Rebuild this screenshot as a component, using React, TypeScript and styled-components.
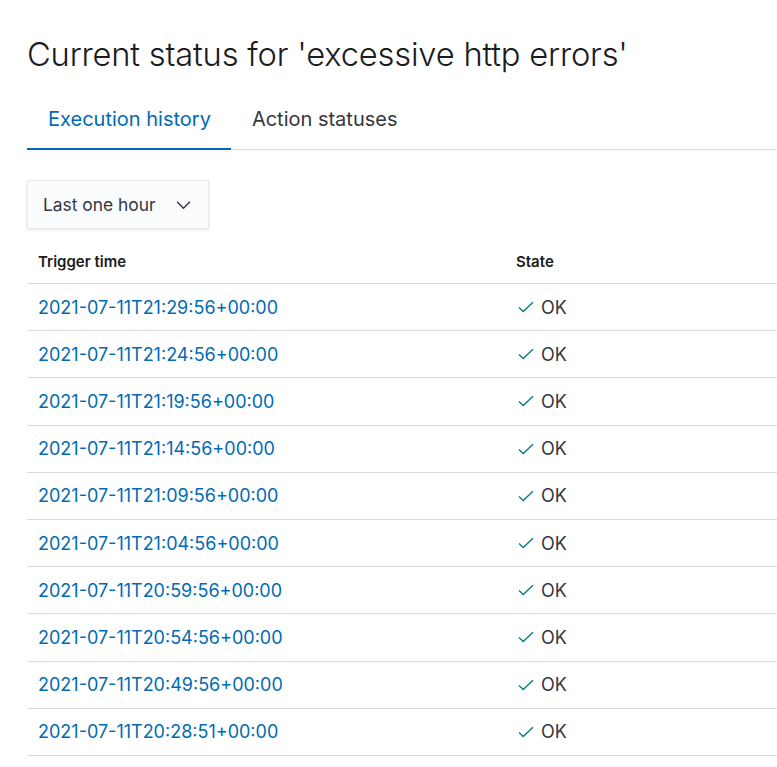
import React from "react";
import styled, { createGlobalStyle } from "styled-components";

const GlobalStyle = createGlobalStyle`
  html, body { margin: 0; padding: 0; background: #fff; overflow: hidden; }
  body { font-family: Inter, "Noto Sans", sans-serif; color: #343741; }
`;

const Page = styled.div`
  padding: 27px 0 0 27px;
  width: 750px;
`;

const Title = styled.h1`
  margin: 0;
  font-size: 32.7px;
  font-weight: 300;
  line-height: 54px;
  color: #1a1c21;
  letter-spacing: -0.2px;
`;

const Tabs = styled.div`
  display: flex;
  border-bottom: 1px solid #d3dae6;
  margin-top: 8px;
`;

const Tab = styled.button<{ $active?: boolean }>`
  font-family: inherit;
  background: none;
  border: none;
  padding: 0 20px 0 21px;
  height: 60px;
  font-size: 20px;
  color: ${(p) => (p.$active ? "#006bb4" : "#343741")};
  position: relative;
  cursor: pointer;
  &::after {
    content: "";
    position: absolute;
    left: 0;
    right: 0;
    bottom: -1px;
    height: 2px;
    background: ${(p) => (p.$active ? "#006bb4" : "transparent")};
  }
`;

const SelectBox = styled.div`
  margin-top: 30px;
  width: 182px;
  height: 49px;
  box-sizing: border-box;
  display: flex;
  align-items: center;
  justify-content: space-between;
  padding: 0 16px 0 15px;
  background: #fbfcfd;
  border: 1px solid rgba(52, 55, 65, 0.1);
  box-shadow: 0 1px 2px rgba(52, 55, 65, 0.12);
  font-size: 17.4px;
  color: #343741;
`;

const Table = styled.div`
  margin-top: 10px;
  width: 750px;
`;

const HeadRow = styled.div`
  display: grid;
  grid-template-columns: 478px 1fr;
  height: 44px;
  align-items: center;
  border-bottom: 1px solid #d3dae6;
`;

const HeadCell = styled.div`
  padding-left: 11px;
  font-size: 15px;
  font-weight: 600;
  color: #1a1c21;
`;

const Row = styled.div`
  display: grid;
  grid-template-columns: 478px 1fr;
  height: 46.2px;
  align-items: center;
  border-bottom: 1px solid #d3dae6;
`;

const TimeLink = styled.a`
  padding-left: 11px;
  font-size: 18px;
  color: #006bb4;
  text-decoration: none;
`;

const StateCell = styled.div`
  padding-left: 11px;
  display: flex;
  align-items: center;
  gap: 7px;
  font-size: 18px;
  color: #343741;
`;

const Check = () => (
  <svg width="18" height="16" viewBox="0 0 18 16">
    <path d="M3 8.5 L7.2 12.5 L17 3.2" fill="none" stroke="#017d73" strokeWidth="1.3" />
  </svg>
);

const Chevron = () => (
  <svg width="17" height="17" viewBox="0 0 16 16">
    <path d="M2 5.5 L8 11.5 L14 5.5" fill="none" stroke="#343741" strokeWidth="1.3" />
  </svg>
);

const times = [
  "2021-07-11T21:29:56+00:00",
  "2021-07-11T21:24:56+00:00",
  "2021-07-11T21:19:56+00:00",
  "2021-07-11T21:14:56+00:00",
  "2021-07-11T21:09:56+00:00",
  "2021-07-11T21:04:56+00:00",
  "2021-07-11T20:59:56+00:00",
  "2021-07-11T20:54:56+00:00",
  "2021-07-11T20:49:56+00:00",
  "2021-07-11T20:28:51+00:00",
];

export default function App() {
  return (
    <>
      <GlobalStyle />
      <Page>
        <Title>Current status for 'excessive http errors'</Title>
        <Tabs>
          <Tab $active>Execution history</Tab>
          <Tab>Action statuses</Tab>
        </Tabs>
        <SelectBox>
          <span>Last one hour</span>
          <Chevron />
        </SelectBox>
        <Table>
          <HeadRow>
            <HeadCell>Trigger time</HeadCell>
            <HeadCell>State</HeadCell>
          </HeadRow>
          {times.map((t) => (
            <Row key={t}>
              <TimeLink href="#">{t}</TimeLink>
              <StateCell>
                <Check />
                OK
              </StateCell>
            </Row>
          ))}
        </Table>
      </Page>
    </>
  );
}
